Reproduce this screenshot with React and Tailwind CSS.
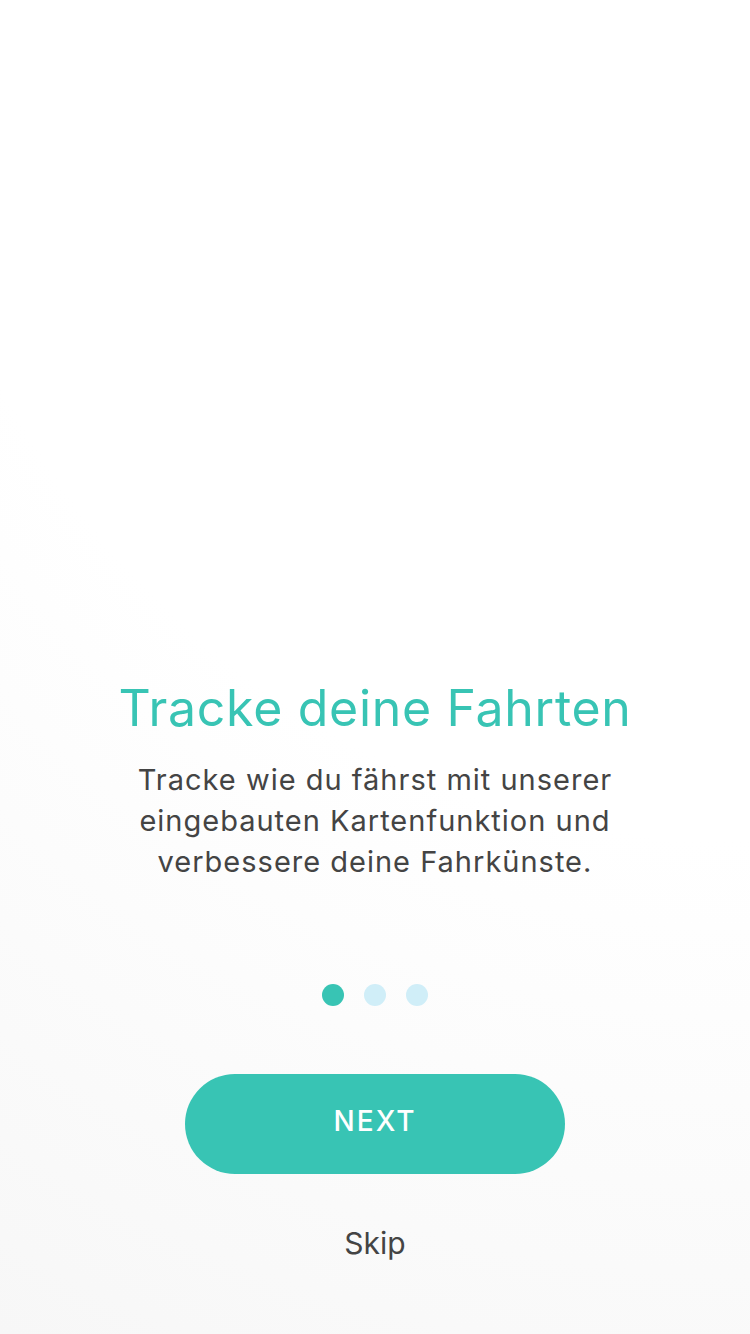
import React from 'react';

const Dots = ({ active = 0, count = 3 }) => (
  <div className="flex items-center justify-center gap-[20px]">
    {Array.from({ length: count }).map((_, i) => (
      <span
        key={i}
        className={i === active ? 'w-[22px] h-[22px] rounded-full bg-[#38c4b4]' : 'w-[22px] h-[22px] rounded-full bg-[#d0eef8]'}
      />
    ))}
  </div>
);

const App = () => {
  return (
    <div
      className="w-[750px] h-[1334px] flex flex-col items-center bg-[radial-gradient(circle_farthest-corner_at_100%_0%,#ffffff_55%,#f7f7f7_100%)]"
      style={{ fontFamily: 'Inter, "Noto Sans", sans-serif' }}
    >
      {/* Slide text */}
      <div className="mt-[674px] flex flex-col items-center text-center">
        <h1 className="text-[50px] leading-[68px] font-normal text-[#38c4b4] tracking-[0.7px]">
          Tracke deine Fahrten
        </h1>
        <p className="mt-[17px] text-[29px] leading-[41px] text-[#444444] tracking-[1px]">
          Tracke wie du fährst mit unserer
          <br />
          eingebauten Kartenfunktion und
          <br />
          verbessere deine Fahrkünste.
        </p>
      </div>

      <div className="mt-[102px]">
        <Dots active={0} />
      </div>

      <button className="mt-[68px] w-[380px] h-[100px] pb-[6px] rounded-full bg-[#38c4b4] text-white text-[28px] font-medium tracking-[2px] flex items-center justify-center">
        NEXT
      </button>

      <button className="mt-[47px] text-[30px] text-[#444444]">Skip</button>
    </div>
  );
};

export default App;
